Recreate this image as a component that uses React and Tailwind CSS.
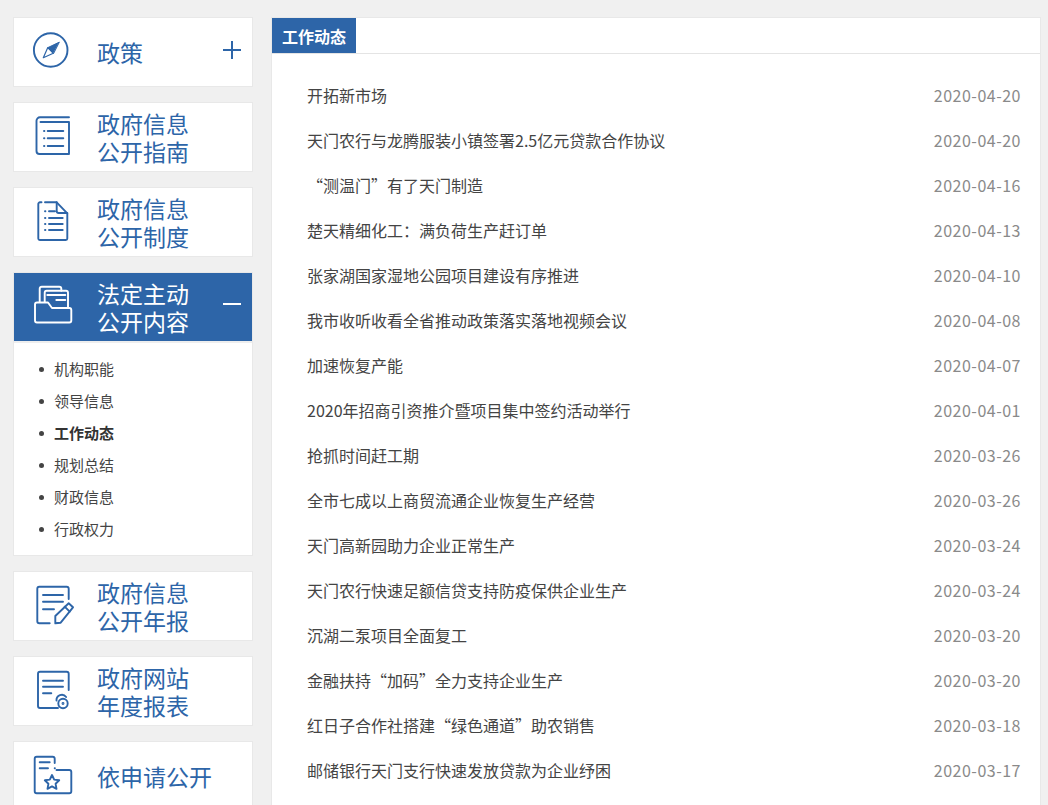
const NEWS = [
  ['开拓新市场', '2020-04-20'],
  ['天门农行与龙腾服装小镇签署2.5亿元贷款合作协议', '2020-04-20'],
  ['“测温门”有了天门制造', '2020-04-16'],
  ['楚天精细化工：满负荷生产赶订单', '2020-04-13'],
  ['张家湖国家湿地公园项目建设有序推进', '2020-04-10'],
  ['我市收听收看全省推动政策落实落地视频会议', '2020-04-08'],
  ['加速恢复产能', '2020-04-07'],
  ['2020年招商引资推介暨项目集中签约活动举行', '2020-04-01'],
  ['抢抓时间赶工期', '2020-03-26'],
  ['全市七成以上商贸流通企业恢复生产经营', '2020-03-26'],
  ['天门高新园助力企业正常生产', '2020-03-24'],
  ['天门农行快速足额信贷支持防疫保供企业生产', '2020-03-24'],
  ['沉湖二泵项目全面复工', '2020-03-20'],
  ['金融扶持“加码”全力支持企业生产', '2020-03-20'],
  ['红日子合作社搭建“绿色通道”助农销售', '2020-03-18'],
  ['邮储银行天门支行快速发放贷款为企业纾困', '2020-03-17'],
]

const SUB_ITEMS = ['机构职能', '领导信息', '工作动态', '规划总结', '财政信息', '行政权力']

function Icon({ children }) {
  return (
    <svg viewBox="0 0 44 44" className="w-[44px] h-[44px] shrink-0 ml-[16px] mr-[23px]" fill="none" stroke="currentColor" strokeWidth="1.9" strokeLinecap="round" strokeLinejoin="round">
      {children}
    </svg>
  )
}

const CompassIcon = () => (
  <Icon>
    <circle cx="20.7" cy="20" r="16.8" />
    <path d="M29 12.3L17.7 17.7 23.3 23.3Z" fill="currentColor" strokeWidth="1" />
    <path d="M13.3 27.7L17.7 17.7 23.3 23.3Z" strokeWidth="1.2" />
  </Icon>
)

const BookIcon = () => (
  <Icon>
    <path d="M39 2.3H10a3.5 3.5 0 0 0-3.5 3.5V36a3 3 0 0 0 3 3H39V7H10.5" />
    <path d="M14 16h.4M17.7 16h15.6M14 23.3h.4M17.7 23.3h15.6M14 31h.4M17.7 31h15.6" />
  </Icon>
)

const DocIcon = () => (
  <Icon>
    <path d="M15 2.3h11.7L37.3 13.3V38.5a1.5 1.5 0 0 1-1.5 1.5H9.8a1.5 1.5 0 0 1-1.5-1.5V4a1.7 1.7 0 0 1 1.7-1.7h1.5" />
    <path d="M26.7 2.3V11a2 2 0 0 0 2 2h8.6" />
    <path d="M15 11.3h.4M19 11.3h6M15 18h.4M19 18h13.7M15 24h.4M19 24h13.7M15 30h.4M19 30h13.7" />
  </Icon>
)

const FolderIcon = () => (
  <Icon>
    <path d="M5 19.5a2 2 0 0 1 2-2h11l4 5.5h17.3a2 2 0 0 1 2 2V35.5a2 2 0 0 1-2 2H7a2 2 0 0 1-2-2Z" />
    <path d="M9.7 17V3.7a2 2 0 0 1 2-2H29.3a2 2 0 0 1 2 2V5.7" />
    <path d="M14.7 17V7.7a2 2 0 0 1 2-2H36a2 2 0 0 1 2 2V22" />
    <path d="M17.3 10h18M26.3 15h9" />
  </Icon>
)

const PencilIcon = () => (
  <Icon>
    <path d="M19.7 39.3H9.3a2 2 0 0 1-2-2V4.7a2 2 0 0 1 2-2H36.7a2 2 0 0 1 2 2V15" />
    <path d="M13 11h20M13 17.7h20M13 25.3h11" />
    <path d="M25.3 39.3V32L38.7 19.3 43 23.3 30.7 38.7Z" />
    <path d="M34.7 22.7l5 5" />
  </Icon>
)

const ReportIcon = () => (
  <Icon>
    <path d="M28 39H10a2 2 0 0 1-2-2V4.7a2 2 0 0 1 2-2H36.7a2 2 0 0 1 2 2V21" />
    <path d="M13 11.7h20M13 17.7h20M13 24.3h8.3" />
    <circle cx="33" cy="34.5" r="4.7" />
    <circle cx="33" cy="34.5" r="0.5" fill="currentColor" />
    <path d="M26.5 31.5a5.3 5.3 0 0 1 9.6-3.5" />
  </Icon>
)

const ApplyIcon = () => (
  <Icon>
    <path d="M26.5 16H39.3a2 2 0 0 1 2 2v19.3a2 2 0 0 1-2 2H6.7a2 2 0 0 1-2-2V4.7a2 2 0 0 1 2-2H22.7a2 2 0 0 1 2 2V9" />
    <path d="M9.7 8.3h10M9.7 14.3h8.3M24.7 14.3h.2" />
    <path d="M22 21l2.2 4.6 5 .7-3.6 3.5.9 5-4.5-2.4-4.5 2.4.9-5-3.6-3.5 5-.7Z" />
  </Icon>
)

function NavCard({ icon, lines, toggle }) {
  return (
    <div className="h-[70px] bg-white border border-[#e8e8e8] flex items-center relative text-[#2d65a8]">
      {icon}
      <div className="text-[23px] leading-[28px]">
        {lines.map(l => <div key={l}>{l}</div>)}
      </div>
      {toggle && (
        <svg viewBox="0 0 18 18" className="w-[18px] h-[18px] absolute right-[11px] top-[23px]" stroke="currentColor" strokeWidth="2">
          <path d="M0 9h18M9 0v18" />
        </svg>
      )}
    </div>
  )
}

export default function App() {
  return (
    <div className="h-screen overflow-hidden bg-[#f0f0f0] flex items-start gap-[18px] pt-[17px] pl-[13px] pr-[7px]" style={{ fontFamily: '"Noto Sans CJK SC", "Noto Sans", sans-serif' }}>
      {/* left nav */}
      <aside className="w-[240px] shrink-0 flex flex-col gap-[15px]">
        <NavCard icon={<CompassIcon />} lines={['政策']} toggle />
        <NavCard icon={<BookIcon />} lines={['政府信息', '公开指南']} />
        <NavCard icon={<DocIcon />} lines={['政府信息', '公开制度']} />

        <div className="bg-white border border-[#e8e8e8]">
          <div className="h-[68px] bg-[#2d65a8] text-white flex items-center relative">
            <FolderIcon />
            <div className="text-[23px] leading-[28px]">
              <div>法定主动</div>
              <div>公开内容</div>
            </div>
            <div className="absolute right-[11px] top-[30px] w-[18px] h-[2px] bg-white" />
          </div>
          <ul className="border-t-2 border-[#eeeeee] py-[10px]">
            {SUB_ITEMS.map(item => (
              <li key={item} className={`h-[32px] flex items-center text-[15px] ${item === '工作动态' ? 'font-bold text-[#333]' : 'text-[#444]'}`}>
                <span className="w-[5px] h-[5px] rounded-full bg-[#444] ml-[25px] mr-[10px]" />
                {item}
              </li>
            ))}
          </ul>
        </div>

        <NavCard icon={<PencilIcon />} lines={['政府信息', '公开年报']} />
        <NavCard icon={<ReportIcon />} lines={['政府网站', '年度报表']} />
        <NavCard icon={<ApplyIcon />} lines={['依申请公开']} />
      </aside>

      {/* news list */}
      <main className="flex-1 bg-white border border-[#e8e8e8]">
        <div className="border-b border-[#e4e4e4] h-[36px]">
          <div className="w-[84px] h-[35px] bg-[#2d65a8] text-white text-[16px] font-bold flex items-center justify-center">
            工作动态
          </div>
        </div>
        <ul className="pt-[18px] pb-[40px] pl-[35px] pr-[19px]">
          {NEWS.map(([title, date], i) => (
            <li key={i} className="h-[45px] flex items-center justify-between text-[16px]">
              <span className="text-[#444]">{title}</span>
              <span className="text-[#8a8a8a] tracking-[0.5px]">{date}</span>
            </li>
          ))}
        </ul>
      </main>
    </div>
  )
}
